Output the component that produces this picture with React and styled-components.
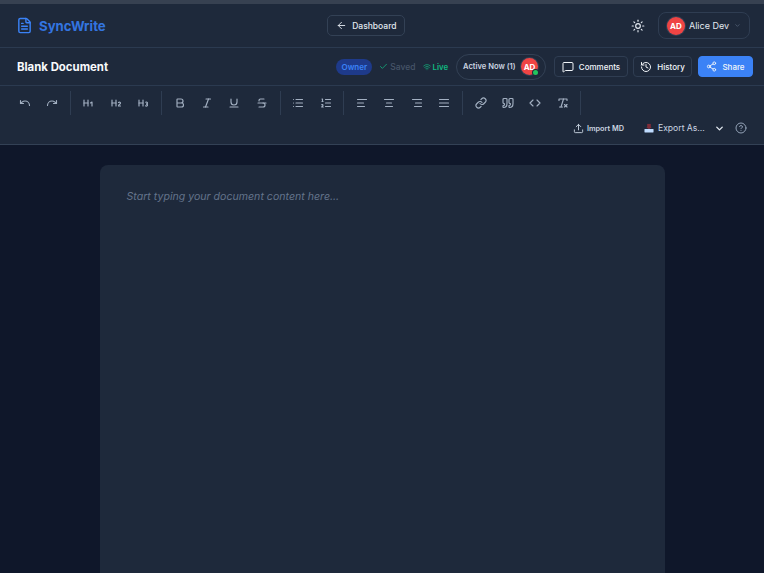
import React from "react";
import styled, { createGlobalStyle } from "styled-components";
import {
  AlignCenter,
  AlignJustify,
  AlignLeft,
  AlignRight,
  ArrowLeft,
  Bold,
  Check,
  ChevronDown,
  Code,
  FileText,
  Heading1,
  Heading2,
  Heading3,
  CircleHelp,
  History,
  Italic,
  Link,
  List,
  ListOrdered,
  MessageSquare,
  Redo,
  RemoveFormatting,
  Share2,
  Strikethrough,
  Sun,
  Underline,
  Undo,
  Upload,
  Wifi,
} from "lucide-react";

const GlobalStyle = createGlobalStyle`
  html, body {
    margin: 0;
    height: 100%;
    overflow: hidden;
    background: #0f172a;
  }
  body {
    font-family: Inter, "Liberation Sans", sans-serif;
    color: #e2e8f0;
  }
  #root { height: 100%; }
  * { box-sizing: border-box; }
`;

const Page = styled.div`
  height: 100vh;
  display: flex;
  flex-direction: column;
  overflow: hidden;
`;

const TopStrip = styled.div`
  height: 4px;
  background: #374151;
  flex: none;
`;

const Header = styled.header`
  height: 44px;
  flex: none;
  display: flex;
  align-items: center;
  justify-content: space-between;
  padding: 0 14px 0 16px;
  background: #1e293b;
  border-bottom: 1px solid #2b3a50;
`;

const Brand = styled.div`
  display: flex;
  align-items: center;
  gap: 6px;
  font-size: 13.2px;
  font-weight: 700;
  color: #3375e0;
  svg { color: #3b82f6; }
`;

const BackButton = styled.button`
  height: 21px;
  width: 78px;
  margin-right: 4px;
  display: flex;
  align-items: center;
  justify-content: center;
  gap: 5px;
  padding: 0;
  background: transparent;
  border: 1px solid #334155;
  border-radius: 5px;
  color: #e2e8f0;
  font: 500 8.5px Inter, sans-serif;
`;

const HeaderRight = styled.div`
  display: flex;
  align-items: center;
  gap: 13px;
  svg.theme { color: #e2e8f0; }
`;

const UserPill = styled.div`
  width: 92px;
  height: 27px;
  display: flex;
  align-items: center;
  gap: 4px;
  padding: 0 8px;
  border: 1px solid #2f3d52;
  border-radius: 8px;
  font-size: 9px;
  white-space: nowrap;
  color: #e2e8f0;
  svg { color: #64748b; margin-left: 1px; }
`;

const Avatar = styled.div`
  position: relative;
  width: ${(p) => p.$size}px;
  height: ${(p) => p.$size}px;
  flex: none;
  display: flex;
  align-items: center;
  justify-content: center;
  border-radius: 50%;
  background: #ef4444;
  box-shadow: 0 0 0 1px #334155;
  color: #fff;
  font-size: 8px;
  font-weight: 700;
`;

const OnlineDot = styled.span`
  position: absolute;
  right: 0;
  bottom: 0;
  width: 5px;
  height: 5px;
  border-radius: 50%;
  background: #22c55e;
  box-shadow: 0 0 0 1px #1e293b;
`;

const DocBar = styled.div`
  height: 38px;
  flex: none;
  display: flex;
  align-items: center;
  justify-content: space-between;
  padding: 0 11px 0 17px;
  background: #1e293b;
  border-bottom: 1px solid #2b3a50;
`;

const DocTitle = styled.h1`
  margin: 0;
  font-size: 11.4px;
  font-weight: 700;
  color: #f8fafc;
`;

const DocActions = styled.div`
  display: flex;
  align-items: center;
`;

const RoleBadge = styled.span`
  width: 36px;
  height: 16px;
  display: flex;
  align-items: center;
  justify-content: center;
  border-radius: 8px;
  background: #1e3a8a;
  color: #3b82f6;
  font-size: 8px;
  font-weight: 600;
  margin-right: 7px;
`;

const Status = styled.span`
  display: flex;
  align-items: center;
  gap: 2px;
  font-size: ${(p) => (p.$live ? 7.8 : 8.5)}px;
  font-weight: ${(p) => (p.$live ? 600 : 500)};
  color: ${(p) => (p.$live ? "#10b981" : "#475569")};
  margin-right: ${(p) => p.$gap}px;
  svg { color: #10b981; }
`;

const ActivePill = styled.div`
  width: 90px;
  height: 26px;
  display: flex;
  align-items: center;
  justify-content: space-between;
  padding: 0 7px 0 6px;
  margin-right: 8px;
  border: 1px solid #334155;
  border-radius: 13px;
  font-size: 7.6px;
  font-weight: 600;
  white-space: nowrap;
  color: #cbd5e1;
`;

const ActionButton = styled.button`
  height: 21px;
  width: ${(p) => p.$w}px;
  margin-left: ${(p) => p.$ml || 0}px;
  display: flex;
  align-items: center;
  justify-content: center;
  gap: 5px;
  padding: 0;
  border: 1px solid ${(p) => (p.$primary ? "#3b82f6" : "#2f3d52")};
  border-radius: 4px;
  background: ${(p) => (p.$primary ? "#3b82f6" : "transparent")};
  color: #f1f5f9;
  font: 500 8px Inter, sans-serif;
`;

const Toolbar = styled.div`
  height: 59px;
  flex: none;
  padding: 5px 17px 0 11px;
  background: #1e293b;
  border-bottom: 1px solid #334155;
`;

const ToolRow = styled.div`
  display: flex;
  align-items: center;
  height: 24px;
`;

const ToolGroup = styled.div`
  display: flex;
  align-items: center;
  height: 24px;
  padding-right: 4px;
  margin-right: 4px;
  border-right: 1px solid #2f3d52;
`;

const ToolButton = styled.button`
  width: 27.4px;
  height: 24px;
  display: flex;
  align-items: center;
  justify-content: center;
  padding: 0;
  background: none;
  border: none;
  color: #a3b0c2;
`;

const SubRow = styled.div`
  display: flex;
  align-items: center;
  justify-content: flex-end;
  height: 26px;
`;

const ImportButton = styled.button`
  display: flex;
  align-items: center;
  gap: 3px;
  padding: 0;
  margin-right: 20px;
  background: none;
  border: none;
  color: #cbd5e1;
  font: 600 7.3px Inter, sans-serif;
  white-space: nowrap;
  svg { color: #cbd5e1; }
`;

const ExportSelect = styled.div`
  width: 81px;
  display: flex;
  align-items: center;
  gap: 4px;
  margin-right: 10px;
  color: #cbd5e1;
  font-size: 8.6px;
  white-space: nowrap;
  svg.chev { margin-left: auto; color: #e2e8f0; }
`;

const HelpButton = styled.button`
  display: flex;
  padding: 0;
  background: none;
  border: none;
  color: #94a3b8;
`;

const Main = styled.main`
  flex: 1;
  min-height: 0;
  display: flex;
  justify-content: center;
  padding-top: 20px;
  background: #0f172a;
`;

const Paper = styled.div`
  width: 565px;
  height: 800px;
  padding: 25px 27px;
  background: #1e293b;
  border-radius: 8px;
  font-size: 10.6px;
  font-style: italic;
  color: #64748b;
`;

// the older two-shape quote mark, current lucide draws it differently
const QuoteIcon = ({ size, strokeWidth }) => (
  <svg width={size} height={size} viewBox="0 0 24 24" fill="none" stroke="currentColor" strokeWidth={strokeWidth} strokeLinecap="round" strokeLinejoin="round">
    <path d="M3 21c3 0 7-1 7-8V5c0-1.25-.756-2.017-2-2H4c-1.25 0-2 .75-2 1.972V11c0 1.25.75 2 2 2 1 0 1 0 1 1v1c0 1-1 2-2 2s-1 .008-1 1.031V20c0 1 0 1 1 1z" />
    <path d="M15 21c3 0 7-1 7-8V5c0-1.25-.757-2.017-2-2h-4c-1.25 0-2 .75-2 1.972V11c0 1.25.75 2 2 2h.75c0 2.25.25 4-2.75 4v3c0 1 0 1 1 1z" />
  </svg>
);

const TrayIcon = () => (
  <svg width="10" height="10" viewBox="0 0 11 11">
    <rect x="3.5" y="1" width="4" height="4" fill="#7f2d3a" />
    <path d="M2.5 4.5h6L5.5 7z" fill="#7f2d3a" />
    <rect x="0.5" y="6.5" width="10" height="4" rx="0.5" fill="#bfdbfe" />
  </svg>
);

const toolGroups = [
  [Undo, Redo],
  [Heading1, Heading2, Heading3],
  [Bold, Italic, Underline, Strikethrough],
  [List, ListOrdered],
  [AlignLeft, AlignCenter, AlignRight, AlignJustify],
  [Link, QuoteIcon, Code, RemoveFormatting],
];

export default function App() {
  return (
    <Page>
      <GlobalStyle />
      <TopStrip />
      <Header>
        <Brand>
          <FileText size={17} />
          SyncWrite
        </Brand>
        <BackButton>
          <ArrowLeft size={11} />
          Dashboard
        </BackButton>
        <HeaderRight>
          <Sun className="theme" size={14} />
          <UserPill>
            <Avatar $size={18}>AD</Avatar>
            Alice Dev
            <ChevronDown size={9} />
          </UserPill>
        </HeaderRight>
      </Header>

      <DocBar>
        <DocTitle>Blank Document</DocTitle>
        <DocActions>
          <RoleBadge>Owner</RoleBadge>
          <Status $gap={7}>
            <Check size={9} />
            Saved
          </Status>
          <Status $live $gap={8}>
            <Wifi size={8} />
            Live
          </Status>
          <ActivePill>
            Active Now (1)
            <Avatar $size={17}>
              AD
              <OnlineDot />
            </Avatar>
          </ActivePill>
          <ActionButton $w={74}>
            <MessageSquare size={12} />
            Comments
          </ActionButton>
          <ActionButton $w={59} $ml={5}>
            <History size={12} />
            History
          </ActionButton>
          <ActionButton $w={55} $ml={6} $primary>
            <Share2 size={11} />
            Share
          </ActionButton>
        </DocActions>
      </DocBar>

      <Toolbar>
        <ToolRow>
          {toolGroups.map((group, i) => (
            <ToolGroup key={i}>
              {group.map((Icon, j) => (
                <ToolButton key={j}>
                  <Icon size={12} strokeWidth={2.3} />
                </ToolButton>
              ))}
            </ToolGroup>
          ))}
        </ToolRow>
        <SubRow>
          <ImportButton>
            <Upload size={11} />
            Import MD
          </ImportButton>
          <ExportSelect>
            <TrayIcon />
            Export As...
            <ChevronDown className="chev" size={11} strokeWidth={3} />
          </ExportSelect>
          <HelpButton>
            <CircleHelp size={12} />
          </HelpButton>
        </SubRow>
      </Toolbar>

      <Main>
        <Paper>Start typing your document content here...</Paper>
      </Main>
    </Page>
  );
}
